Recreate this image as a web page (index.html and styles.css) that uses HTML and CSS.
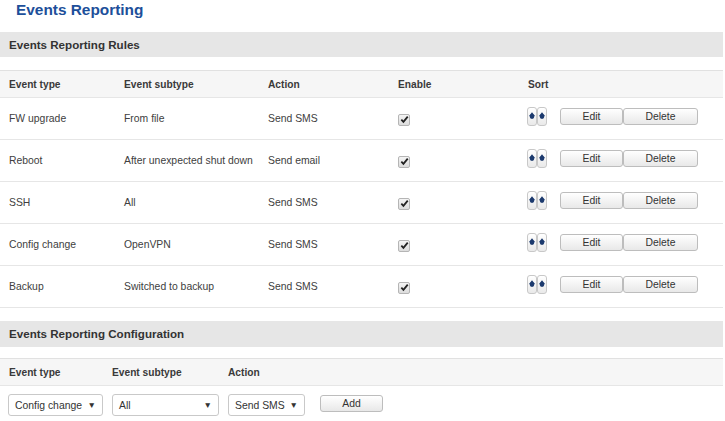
FILE: index.html
```html
<!DOCTYPE html>
<html>
<head>
<meta charset="utf-8">
<link rel="stylesheet" href="styles.css">
</head>
<body>
<h1 class="title">Events Reporting</h1>

<div class="section-bar">Events Reporting Rules</div>

<div class="rules">
  <div class="row head">
    <div class="c">Event type</div>
    <div class="c">Event subtype</div>
    <div class="c">Action</div>
    <div class="c">Enable</div>
    <div class="c">Sort</div>
  </div>

  <div class="row">
    <div class="c">FW upgrade</div>
    <div class="c">From file</div>
    <div class="c">Send SMS</div>
    <div class="c"><span class="chk"><svg viewBox="0 0 10 10" width="9" height="9"><path d="M1.5 5.2 L3.8 7.6 L8.6 1.8" fill="none" stroke="#222" stroke-width="2"/></svg></span></div>
    <div class="c sortcell">
      <span class="sb"><svg viewBox="0 0 8 16" width="8" height="16"><path d="M4 4.2 L7 8 L1 8 Z" fill="#1c3a6e"/><circle cx="4" cy="8.6" r="2.3" fill="#1c3a6e"/></svg></span><span class="sb"><svg viewBox="0 0 8 16" width="8" height="16"><path d="M4 4.2 L7 8 L1 8 Z" fill="#1c3a6e"/><circle cx="4" cy="8.6" r="2.3" fill="#1c3a6e"/></svg></span>
      <span class="btn edit">Edit</span><span class="btn del">Delete</span>
    </div>
  </div>

  <div class="row">
    <div class="c">Reboot</div>
    <div class="c">After unexpected shut down</div>
    <div class="c">Send email</div>
    <div class="c"><span class="chk"><svg viewBox="0 0 10 10" width="9" height="9"><path d="M1.5 5.2 L3.8 7.6 L8.6 1.8" fill="none" stroke="#222" stroke-width="2"/></svg></span></div>
    <div class="c sortcell">
      <span class="sb"><svg viewBox="0 0 8 16" width="8" height="16"><path d="M4 4.2 L7 8 L1 8 Z" fill="#1c3a6e"/><circle cx="4" cy="8.6" r="2.3" fill="#1c3a6e"/></svg></span><span class="sb"><svg viewBox="0 0 8 16" width="8" height="16"><path d="M4 4.2 L7 8 L1 8 Z" fill="#1c3a6e"/><circle cx="4" cy="8.6" r="2.3" fill="#1c3a6e"/></svg></span>
      <span class="btn edit">Edit</span><span class="btn del">Delete</span>
    </div>
  </div>

  <div class="row">
    <div class="c">SSH</div>
    <div class="c">All</div>
    <div class="c">Send SMS</div>
    <div class="c"><span class="chk"><svg viewBox="0 0 10 10" width="9" height="9"><path d="M1.5 5.2 L3.8 7.6 L8.6 1.8" fill="none" stroke="#222" stroke-width="2"/></svg></span></div>
    <div class="c sortcell">
      <span class="sb"><svg viewBox="0 0 8 16" width="8" height="16"><path d="M4 4.2 L7 8 L1 8 Z" fill="#1c3a6e"/><circle cx="4" cy="8.6" r="2.3" fill="#1c3a6e"/></svg></span><span class="sb"><svg viewBox="0 0 8 16" width="8" height="16"><path d="M4 4.2 L7 8 L1 8 Z" fill="#1c3a6e"/><circle cx="4" cy="8.6" r="2.3" fill="#1c3a6e"/></svg></span>
      <span class="btn edit">Edit</span><span class="btn del">Delete</span>
    </div>
  </div>

  <div class="row">
    <div class="c">Config change</div>
    <div class="c">OpenVPN</div>
    <div class="c">Send SMS</div>
    <div class="c"><span class="chk"><svg viewBox="0 0 10 10" width="9" height="9"><path d="M1.5 5.2 L3.8 7.6 L8.6 1.8" fill="none" stroke="#222" stroke-width="2"/></svg></span></div>
    <div class="c sortcell">
      <span class="sb"><svg viewBox="0 0 8 16" width="8" height="16"><path d="M4 4.2 L7 8 L1 8 Z" fill="#1c3a6e"/><circle cx="4" cy="8.6" r="2.3" fill="#1c3a6e"/></svg></span><span class="sb"><svg viewBox="0 0 8 16" width="8" height="16"><path d="M4 4.2 L7 8 L1 8 Z" fill="#1c3a6e"/><circle cx="4" cy="8.6" r="2.3" fill="#1c3a6e"/></svg></span>
      <span class="btn edit">Edit</span><span class="btn del">Delete</span>
    </div>
  </div>

  <div class="row">
    <div class="c">Backup</div>
    <div class="c">Switched to backup</div>
    <div class="c">Send SMS</div>
    <div class="c"><span class="chk"><svg viewBox="0 0 10 10" width="9" height="9"><path d="M1.5 5.2 L3.8 7.6 L8.6 1.8" fill="none" stroke="#222" stroke-width="2"/></svg></span></div>
    <div class="c sortcell">
      <span class="sb"><svg viewBox="0 0 8 16" width="8" height="16"><path d="M4 4.2 L7 8 L1 8 Z" fill="#1c3a6e"/><circle cx="4" cy="8.6" r="2.3" fill="#1c3a6e"/></svg></span><span class="sb"><svg viewBox="0 0 8 16" width="8" height="16"><path d="M4 4.2 L7 8 L1 8 Z" fill="#1c3a6e"/><circle cx="4" cy="8.6" r="2.3" fill="#1c3a6e"/></svg></span>
      <span class="btn edit">Edit</span><span class="btn del">Delete</span>
    </div>
  </div>
</div>

<div class="section-bar second">Events Reporting Configuration</div>

<div class="config">
  <div class="crow head">
    <div class="c">Event type</div>
    <div class="c">Event subtype</div>
    <div class="c">Action</div>
  </div>
  <div class="crow inputs">
    <div class="sel s1"><span>Config change</span><span class="arr">▼</span></div>
    <div class="sel s2"><span>All</span><span class="arr">▼</span></div>
    <div class="sel s3"><span>Send SMS</span><span class="arr">▼</span></div>
    <span class="btn add">Add</span>
  </div>
</div>
</body>
</html>
```

FILE: styles.css
```css
html, body {
  margin: 0;
  padding: 0;
  background: #fff;
  font-family: "Liberation Sans", Arial, sans-serif;
  color: #404040;
}

.title {
  margin: 0;
  padding: 1px 0 0 16px;
  height: 32px;
  box-sizing: border-box;
  font-size: 15.4px;
  font-weight: bold;
  color: #1d4f9a;
  line-height: 17px;
}

.section-bar {
  width: 723px;
  height: 25px;
  background: #e6e6e6;
  box-sizing: border-box;
  padding-left: 9px;
  font-size: 11.6px;
  font-weight: bold;
  color: #333;
  line-height: 25px;
}

.section-bar.second {
  height: 26px;
  line-height: 26px;
  margin-top: 13px;
}

.rules {
  width: 723px;
  margin-top: 13px;
}

.row {
  display: grid;
  grid-template-columns: 115px 144px 130px 130px 1fr;
  height: 42px;
  align-items: center;
  border-bottom: 1px solid #e6e6e6;
  box-sizing: border-box;
  font-size: 10.4px;
}

.row.head {
  height: 28px;
  background: #f6f6f6;
  border-top: 1px solid #e1e1e1;
  font-weight: bold;
  font-size: 10.2px;
  color: #3a3a3a;
}

.row .c {
  padding-left: 9px;
  white-space: nowrap;
}

.chk {
  display: inline-flex;
  align-items: center;
  justify-content: center;
  width: 10px;
  height: 10px;
  border: 1px solid #b5b5b5;
  border-radius: 2px;
  background: linear-gradient(#f4f4f4, #dcdcdc);
  margin-top: 3px;
}

.sortcell {
  display: flex;
  align-items: center;
  padding-left: 8px !important;
}

.sb {
  display: inline-flex;
  align-items: center;
  justify-content: center;
  box-sizing: border-box;
  width: 10px;
  height: 19px;
  border: 1px solid #c8c8c8;
  border-radius: 3px;
  background: linear-gradient(#ffffff, #e9e9e9);
  margin-top: -5px;
}

.sb + .sb {
  margin-right: 13px;
}

.btn {
  display: inline-block;
  box-sizing: border-box;
  height: 17px;
  line-height: 15px;
  border: 1px solid #bdbdbd;
  border-radius: 3px;
  background: linear-gradient(#ffffff, #e8e8e8);
  text-align: center;
  font-size: 10.4px;
  color: #333;
  margin-top: -5px;
}

.btn.edit {
  width: 63px;
}

.btn.del {
  width: 75px;
}

.config {
  width: 723px;
  margin-top: 11px;
}

.crow {
  display: grid;
  grid-template-columns: 103px 116px 1fr;
  align-items: center;
}

.crow.head {
  height: 28px;
  background: #f6f6f6;
  border-top: 1px solid #e1e1e1;
  border-bottom: 1px solid #e6e6e6;
  box-sizing: border-box;
  font-weight: bold;
  font-size: 10.2px;
  color: #3a3a3a;
}

.crow.head .c {
  padding-left: 9px;
}

.crow.inputs {
  display: flex;
  align-items: flex-start;
  padding-top: 8px;
  padding-left: 8px;
}

.sel {
  display: flex;
  align-items: center;
  justify-content: space-between;
  box-sizing: border-box;
  height: 22px;
  border: 1px solid #c9c9c9;
  border-radius: 3px;
  background: #fff;
  padding: 0 6px 0 6px;
  font-size: 10.4px;
  color: #333;
}

.sel .arr {
  font-size: 8.5px;
  color: #333;
}

.s1 { width: 95px; margin-right: 9px; }
.s2 { width: 107px; margin-right: 9px; }
.s3 { width: 77px; margin-right: 15px; }

.btn.add {
  width: 63px;
  margin-top: 1px;
}
```
